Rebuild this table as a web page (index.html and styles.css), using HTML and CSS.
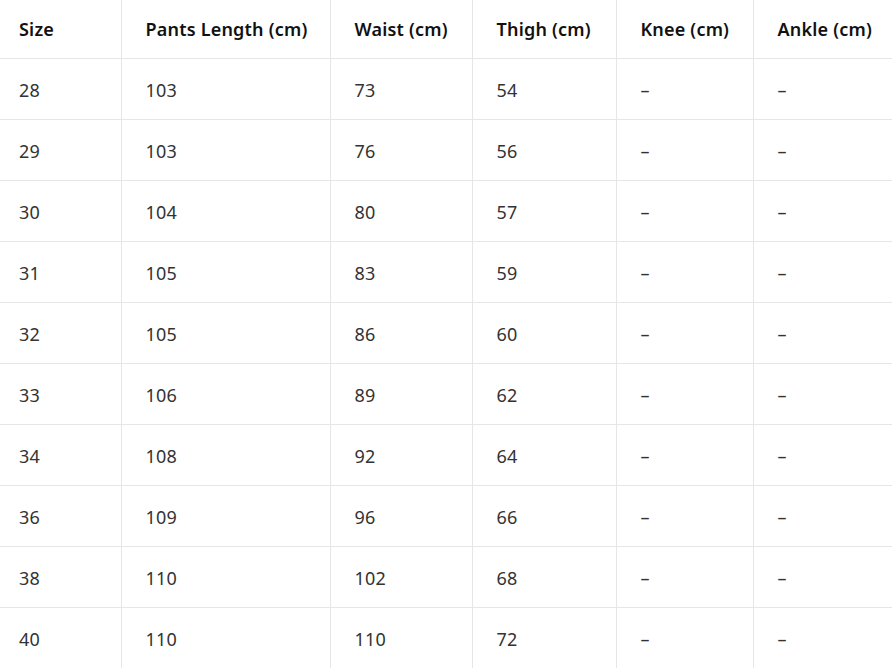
FILE: index.html
```html
<!DOCTYPE html>
<html>
<head>
<meta charset="utf-8">
<link rel="stylesheet" href="styles.css">
</head>
<body>
<table class="size-table">
<colgroup>
<col class="c1"><col class="c2"><col class="c3"><col class="c4"><col class="c5"><col class="c6">
</colgroup>
<thead>
<tr><th>Size</th><th>Pants Length (cm)</th><th>Waist (cm)</th><th>Thigh (cm)</th><th>Knee (cm)</th><th>Ankle (cm)</th></tr>
</thead>
<tbody>
<tr><td>28</td><td>103</td><td>73</td><td>54</td><td>–</td><td>–</td></tr>
<tr><td>29</td><td>103</td><td>76</td><td>56</td><td>–</td><td>–</td></tr>
<tr><td>30</td><td>104</td><td>80</td><td>57</td><td>–</td><td>–</td></tr>
<tr><td>31</td><td>105</td><td>83</td><td>59</td><td>–</td><td>–</td></tr>
<tr><td>32</td><td>105</td><td>86</td><td>60</td><td>–</td><td>–</td></tr>
<tr><td>33</td><td>106</td><td>89</td><td>62</td><td>–</td><td>–</td></tr>
<tr><td>34</td><td>108</td><td>92</td><td>64</td><td>–</td><td>–</td></tr>
<tr><td>36</td><td>109</td><td>96</td><td>66</td><td>–</td><td>–</td></tr>
<tr><td>38</td><td>110</td><td>102</td><td>68</td><td>–</td><td>–</td></tr>
<tr><td>40</td><td>110</td><td>110</td><td>72</td><td>–</td><td>–</td></tr>
</tbody>
</table>
</body>
</html>
```
FILE: styles.css
```css
html, body {
  margin: 0;
  padding: 0;
  background: #fff;
}
body {
  font-family: "Noto Sans", "Open Sans", sans-serif;
  overflow: hidden;
}
.size-table {
  width: 892px;
  border-collapse: collapse;
  table-layout: fixed;
  font-size: 18px;
  letter-spacing: 0.2px;
}
.c1 { width: 121px; }
.c2 { width: 209px; }
.c3 { width: 142px; }
.c4 { width: 144px; }
.c5 { width: 137px; }
.c6 { width: 139px; }
.size-table th,
.size-table td {
  text-align: left;
  padding: 0 0 0 24px;
  border-left: 1px solid #e6e6e6;
  border-bottom: 1px solid #e6e6e6;
  white-space: nowrap;
}
.size-table th:first-child,
.size-table td:first-child {
  border-left: none;
  padding-left: 19px;
}
.size-table th {
  height: 58px;
  font-weight: 600;
  color: #111;
}
.size-table td {
  height: 58px;
  padding-top: 2px;
  color: #333;
  font-weight: 400;
}
```
